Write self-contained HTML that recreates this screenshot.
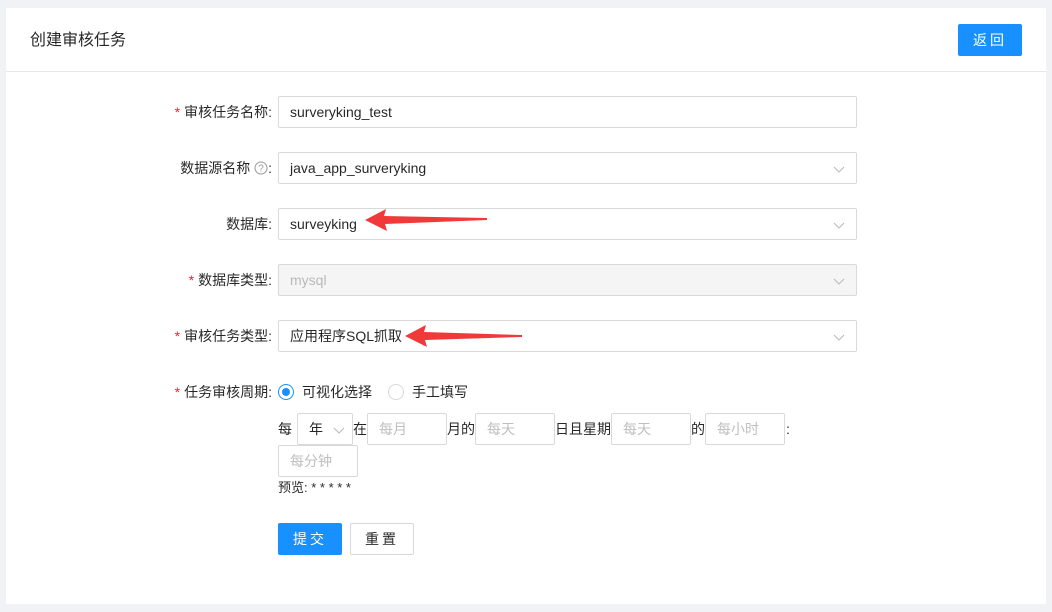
<!DOCTYPE html>
<html><head><meta charset="utf-8"><style>
*{box-sizing:border-box;margin:0;padding:0}
body{width:1052px;height:612px;background:#f0f2f5;font-family:"Liberation Sans","Noto Sans CJK SC",sans-serif;font-size:14px;color:rgba(0,0,0,.85);position:relative;overflow:hidden}
.card{position:absolute;left:6px;top:8px;width:1040px;height:596px;background:#fff}
.a{position:absolute}
.hd{left:6px;top:8px;width:1040px;height:64px;border-bottom:1px solid #e8e8e8}
.title{left:30px;top:30px;font-size:16px;line-height:22px}
.btn{position:absolute;height:32px;border-radius:2px;text-align:center;line-height:30px;font-size:14px;letter-spacing:3px}
.pri{background:#1890ff;border:1px solid #1890ff;color:#fff}
.def{background:#fff;border:1px solid #d9d9d9}
.lbl{position:absolute;right:780px;height:32px;line-height:32px;white-space:nowrap}
.req{color:#f5222d;margin-right:4px;font-family:"Liberation Sans",sans-serif}
.inp{position:absolute;left:278px;width:579px;height:32px;border:1px solid #d9d9d9;border-radius:2px;padding-left:11px;line-height:30px;background:#fff}
.dis{background:#f5f5f5;color:rgba(0,0,0,.25)}
.chev{position:absolute;right:11px;top:10px;width:12px;height:12px}
.ci{position:absolute;height:32px;border:1px solid #d9d9d9;border-radius:2px;line-height:30px;padding-left:11px;color:#bfbfbf;background:#fff}
.t{position:absolute;line-height:32px}
</style></head><body>
<div class="card"></div>
<div class="a hd"></div>
<div class="a title">创建审核任务</div>
<div class="btn pri" style="left:958px;top:24px;width:64px">返回</div>

<div class="lbl" style="top:96px"><span class="req">*</span>审核任务名称:</div>
<div class="inp" style="top:96px">surveryking_test</div>

<div class="lbl" style="top:152px">数据源名称 <svg width="14" height="14" viewBox="0 0 14 14" style="vertical-align:-2px"><circle cx="7" cy="7" r="6" fill="none" stroke="#999"/><text x="7" y="10.5" font-size="10" text-anchor="middle" fill="#999" font-family="Liberation Sans">?</text></svg>:</div>
<div class="inp" style="top:152px">java_app_surveryking<svg class="chev" viewBox="0 0 12 12"><path d="M1 4 L6 9 L11 4" fill="none" stroke="#bbb" stroke-width="1.1"/></svg></div>

<div class="lbl" style="top:208px">数据库:</div>
<div class="inp" style="top:208px">surveyking<svg class="chev" viewBox="0 0 12 12"><path d="M1 4 L6 9 L11 4" fill="none" stroke="#bbb" stroke-width="1.1"/></svg></div>

<div class="lbl" style="top:264px"><span class="req">*</span>数据库类型:</div>
<div class="inp dis" style="top:264px">mysql<svg class="chev" viewBox="0 0 12 12"><path d="M1 4 L6 9 L11 4" fill="none" stroke="#bbb" stroke-width="1.1"/></svg></div>

<div class="lbl" style="top:320px"><span class="req">*</span>审核任务类型:</div>
<div class="inp" style="top:320px">应用程序SQL抓取<svg class="chev" viewBox="0 0 12 12"><path d="M1 4 L6 9 L11 4" fill="none" stroke="#bbb" stroke-width="1.1"/></svg></div>

<svg class="a" style="left:0;top:0" width="1052" height="612">
<path d="M365 220 L386 209 L384 216 L487 218 L487 220 L385 224 L387 231 Z" fill="#f03a3a"/>
<path d="M405 336 L426 325 L424 332 L522 335 L522 337 L425 340 L427 347 Z" fill="#f03a3a"/>
</svg>

<div class="lbl" style="top:376px"><span class="req">*</span>任务审核周期:</div>
<svg class="a" style="left:278px;top:384px" width="16" height="16"><circle cx="8" cy="8" r="7.5" fill="#fff" stroke="#1890ff"/><circle cx="8" cy="8" r="4" fill="#1890ff"/></svg>
<div class="t" style="left:302px;top:376px">可视化选择</div>
<svg class="a" style="left:388px;top:384px" width="16" height="16"><circle cx="8" cy="8" r="7.5" fill="#fff" stroke="#d9d9d9"/></svg>
<div class="t" style="left:412px;top:376px">手工填写</div>

<div class="t" style="left:278px;top:413px">每</div>
<div class="ci" style="left:297px;top:413px;width:56px;color:rgba(0,0,0,.85)">年<svg style="position:absolute;right:7px;top:10px" width="12" height="12" viewBox="0 0 12 12"><path d="M1 4 L6 9 L11 4" fill="none" stroke="#bbb" stroke-width="1.1"/></svg></div>
<div class="t" style="left:353px;top:413px">在</div>
<div class="ci" style="left:367px;top:413px;width:80px">每月</div>
<div class="t" style="left:447px;top:413px">月的</div>
<div class="ci" style="left:475px;top:413px;width:80px">每天</div>
<div class="t" style="left:555px;top:413px">日且星期</div>
<div class="ci" style="left:611px;top:413px;width:80px">每天</div>
<div class="t" style="left:691px;top:413px">的</div>
<div class="ci" style="left:705px;top:413px;width:80px">每小时</div>
<div class="t" style="left:786px;top:413px">:</div>
<div class="ci" style="left:278px;top:445px;width:80px">每分钟</div>
<div class="t" style="left:278px;top:472px;font-size:13px">预览: * * * * *</div>

<div class="btn pri" style="left:278px;top:523px;width:64px">提交</div>
<div class="btn def" style="left:350px;top:523px;width:64px">重置</div>
</body></html>
